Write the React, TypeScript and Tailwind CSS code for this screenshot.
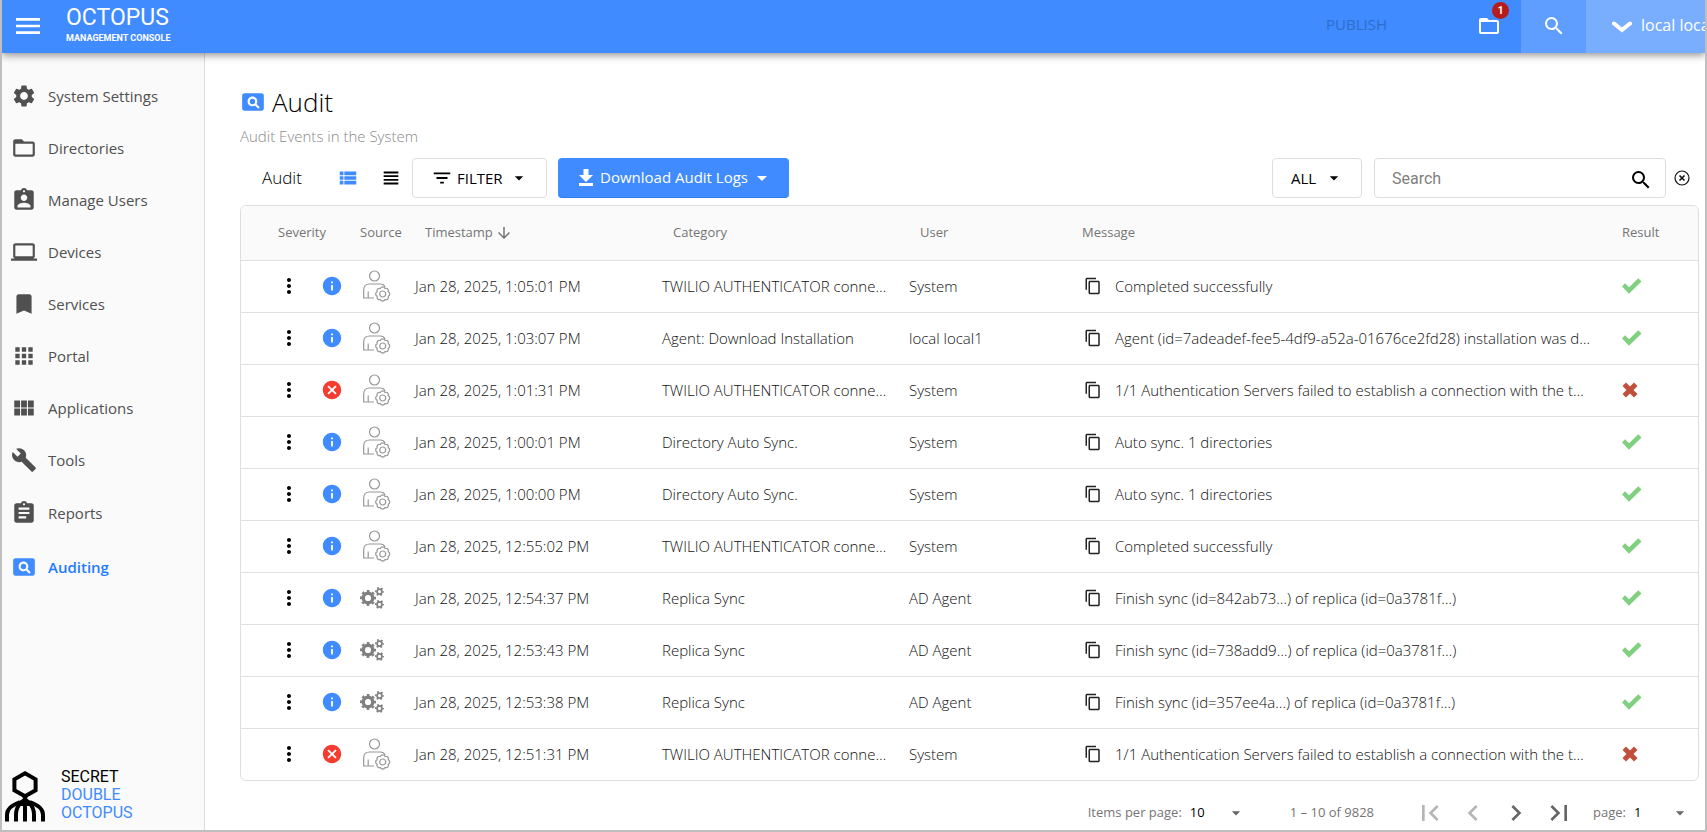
import React from "react";
import {
  MdApps,
  MdArrowDownward,
  MdArrowDropDown,
  MdAssignment,
  MdAssignmentInd,
  MdBookmark,
  MdBuild,
  MdCancel,
  MdChevronLeft,
  MdChevronRight,
  MdContentCopy,
  MdFilterList,
  MdFirstPage,
  MdFolderOpen,
  MdInfo,
  MdLaptop,
  MdLastPage,
  MdMenu,
  MdMoreVert,
  MdPageview,
  MdSearch,
  MdSettings,
  MdViewHeadline,
  MdViewList,
  MdViewModule,
} from "react-icons/md";

const menu = [
  { label: "System Settings", icon: MdSettings },
  { label: "Directories", icon: MdFolderOpen },
  { label: "Manage Users", icon: MdAssignmentInd },
  { label: "Devices", icon: MdLaptop },
  { label: "Services", icon: MdBookmark },
  { label: "Portal", icon: MdApps },
  { label: "Applications", icon: MdViewModule },
  { label: "Tools", icon: MdBuild },
  { label: "Reports", icon: MdAssignment, tall: true },
  { label: "Auditing", icon: MdPageview, tall: true, active: true },
];

type AuditEvent = {
  time: string;
  category: string;
  user: string;
  message: string;
  source: "user" | "agent";
  ok: boolean;
};

const TWILIO = "TWILIO AUTHENTICATOR conne…";
const FAILED = "1/1 Authentication Servers failed to establish a connection with the t…";

const events: AuditEvent[] = [
  { time: "1:05:01 PM", category: TWILIO, user: "System", message: "Completed successfully", source: "user", ok: true },
  {
    time: "1:03:07 PM",
    category: "Agent: Download Installation",
    user: "local local1",
    message: "Agent (id=7adeadef-fee5-4df9-a52a-01676ce2fd28) installation was d…",
    source: "user",
    ok: true,
  },
  { time: "1:01:31 PM", category: TWILIO, user: "System", message: FAILED, source: "user", ok: false },
  { time: "1:00:01 PM", category: "Directory Auto Sync.", user: "System", message: "Auto sync. 1 directories", source: "user", ok: true },
  { time: "1:00:00 PM", category: "Directory Auto Sync.", user: "System", message: "Auto sync. 1 directories", source: "user", ok: true },
  { time: "12:55:02 PM", category: TWILIO, user: "System", message: "Completed successfully", source: "user", ok: true },
  { time: "12:54:37 PM", category: "Replica Sync", user: "AD Agent", message: "Finish sync (id=842ab73…) of replica (id=0a3781f…)", source: "agent", ok: true },
  { time: "12:53:43 PM", category: "Replica Sync", user: "AD Agent", message: "Finish sync (id=738add9…) of replica (id=0a3781f…)", source: "agent", ok: true },
  { time: "12:53:38 PM", category: "Replica Sync", user: "AD Agent", message: "Finish sync (id=357ee4a…) of replica (id=0a3781f…)", source: "agent", ok: true },
  { time: "12:51:31 PM", category: TWILIO, user: "System", message: FAILED, source: "user", ok: false },
];

const UserGearIcon = () => (
  <svg viewBox="0 0 28 32" className="ml-[3px] h-8 w-7" fill="none" stroke="#979797" strokeWidth="1.200">
    <circle cx="11.5" cy="6" r="5" />
    <path d="M11 28H.7v-8c0-4 2.300-6 6-6H17c2.500 0 4.400 1 5 3" />
    <path d="M5.200 21.500V28" />
    <g transform="translate(19.700 24)">
      <path d="M5.540 2.300A2.500 2.500 0 0 1 2.300 5.540A2.500 2.500 0 0 1-2.300 5.540A2.500 2.500 0 0 1-5.540 2.300A2.500 2.500 0 0 1-5.540-2.300A2.500 2.500 0 0 1-2.300-5.540A2.500 2.500 0 0 1 2.300-5.540A2.500 2.500 0 0 1 5.540-2.300A2.500 2.500 0 0 1 5.540 2.300Z" />
      <circle r="3" />
    </g>
  </svg>
);

// ring + dashed ring for the teeth
const GearsIcon = () => (
  <svg viewBox="0 0 24 22" className="h-[22px] w-6" fill="none" stroke="#808080">
    <circle cx="8" cy="11" r="4.800" strokeWidth="3.400" />
    <circle cx="8" cy="11" r="7" strokeWidth="2" strokeDasharray="2.750 2.748" strokeDashoffset="1.375" />
    <circle cx="19.500" cy="4.600" r="2.500" strokeWidth="1.700" />
    <circle cx="19.500" cy="4.600" r="3.800" strokeWidth="1.500" strokeDasharray="1.800 2.179" strokeDashoffset="0.900" />
    <circle cx="19.500" cy="17.400" r="2.500" strokeWidth="1.700" />
    <circle cx="19.500" cy="17.400" r="3.800" strokeWidth="1.500" strokeDasharray="1.800 2.179" strokeDashoffset="0.900" />
  </svg>
);

const CheckIcon = () => (
  <svg viewBox="0 0 20 16" className="h-4 w-5" fill="#7fd17f">
    <title>Success</title>
    <path d="M0 8.500 3 5.300 7 9.200 16.300.3 19.500 3.500 7 15.800Z" />
  </svg>
);

const CrossIcon = () => (
  <svg viewBox="0 0 16 16" className="h-4 w-4" fill="#c04f3c">
    <title>Failure</title>
    <path d="M4 .5 8 4.500l4-4L15.500 4l-4 4 4 4-3.500 3.500-4-4-4 4L.5 12l4-4-4-4Z" />
  </svg>
);

const OctopusIcon = () => (
  <svg viewBox="0 0 40 51" className="h-[51px] w-10" fill="none" stroke="#000">
    <path d="M20 2.300 30.600 8.300V19.300L20 25.300 9.400 19.300V8.300Z" strokeWidth="4" />
    <path d="M17 25h6l-1 2.500 6 4.500-3 3H15l-3-3 6-4.500Z" fill="#000" stroke="none" />
    <path
      d="M20 28v22.500M16.500 31Q11 36 11 44v6.500M23.500 31Q29 36 29 44v6.500M15 31C7 34 2 37.500 2 43.500v7M25 31c8 3 13 6.500 13 12.500v7"
      strokeWidth="4"
    />
  </svg>
);

const TopBar = () => (
  <header className="relative z-10 flex h-[53px] shrink-0 items-stretch bg-[#3f8bff] text-white shadow-[0_2px_8px_rgba(0,0,0,0.45)]">
    <button className="ml-3 flex w-7 items-center justify-center pb-0.5" aria-label="Toggle menu">
      <MdMenu className="h-8 w-8 shrink-0" />
    </button>
    <a href="#home" className="ml-6 flex flex-col pt-1">
      <span className="font-[Roboto,sans-serif] text-[23px] leading-7">OCTOPUS</span>
      <span className="font-[Roboto,sans-serif] text-[9px] leading-3 font-bold whitespace-nowrap">MANAGEMENT CONSOLE</span>
    </a>
    <div className="ml-auto flex items-stretch">
      <button className="mr-[90px] pb-1 text-[15px] text-[#2f6dcb]" disabled>
        PUBLISH
      </button>
      <button className="relative mr-5 flex items-center pb-0.5" aria-label="Pending changes">
        <MdFolderOpen className="h-6 w-6" />
        <span className="absolute top-0.5 -right-2 flex h-[17px] w-[17px] items-center justify-center rounded-full bg-[#b71c1c] font-[Roboto,sans-serif] text-[10px] font-bold">
          1
        </span>
      </button>
      <button className="flex w-[65px] items-center justify-center bg-[#5f9eff] pb-0.5" aria-label="Search">
        <MdSearch className="h-6 w-6" />
      </button>
      <button className="flex w-[119px] items-center overflow-hidden bg-[#79aeff] pb-1 pl-[26px] text-base whitespace-nowrap">
        <svg viewBox="0 0 20 12" className="mt-1 mr-[9px] h-3 w-5 shrink-0" fill="none" stroke="#fff" strokeWidth="4" strokeLinecap="round">
          <path d="M2 2.500 10 9l8-6.500" />
        </svg>
        local local1
      </button>
    </div>
  </header>
);

const SideMenu = () => (
  <aside className="flex w-[203px] shrink-0 flex-col border-r border-[#dcdcdc] bg-[#fafafa]">
    <nav className="pt-[17px]">
      {menu.map(({ label, icon: Icon, tall, active }) => (
        <a
          key={label}
          href={`#${label}`}
          className={`flex items-center gap-[11px] pl-[9px] text-[15px] ${tall ? "h-[54px]" : "h-[52px]"} ${
            active ? "font-semibold text-[#1f7bff]" : "text-[#505050]"
          }`}
        >
          <Icon className={`h-[26px] w-[26px] ${active ? "text-[#3f8bff]" : ""}`} />
          {label}
        </a>
      ))}
    </nav>
    <div className="mt-auto flex items-end gap-4 pb-2 pl-[3px]">
      <OctopusIcon />
      <p className="font-[Roboto,sans-serif] text-base leading-[18px] text-[#3f8bff]">
        <span className="block text-black">SECRET</span>
        <span className="block">DOUBLE</span>
        <span className="block">OCTOPUS</span>
      </p>
    </div>
  </aside>
);

const Toolbar = () => (
  <div className="mt-3 flex h-10 items-center">
    <span className="ml-[22px] w-[75px] text-[17px] font-light">Audit</span>
    <button className="text-[#3f8bff]" aria-label="List view">
      <MdViewList className="h-[22px] w-[22px]" />
    </button>
    <button className="ml-[21px]" aria-label="Compact view">
      <MdViewHeadline className="h-[22px] w-[22px]" />
    </button>
    <button className="ml-[10px] flex h-10 w-[135px] items-center rounded border border-[#dedede] pl-[18px] text-[15px]">
      <MdFilterList className="mr-1 h-[22px] w-[22px]" />
      FILTER
      <MdArrowDropDown className="ml-1.5 h-5 w-5" />
    </button>
    <button className="ml-[11px] flex h-10 w-[231px] items-center rounded border-b border-[#2f7cf5] bg-[#3f8bff] pl-5 text-[15px] font-medium whitespace-nowrap text-white">
      <svg viewBox="0 0 16 18" className="mr-1.5 h-[18px] w-4 shrink-0" fill="currentColor">
        <path d="M5.500 0h5v6H15l-7 7-7-7h4.500ZM1 14h14v3H1Z" />
      </svg>
      Download Audit Logs
      <MdArrowDropDown className="ml-0.5 h-6 w-6 shrink-0" />
    </button>
    <div className="relative ml-auto">
      <select className="h-10 w-[90px] appearance-none rounded border border-[#dedede] bg-white pl-[18px] text-[15px]" aria-label="Severity">
        <option>ALL</option>
      </select>
      <MdArrowDropDown className="pointer-events-none absolute top-2.5 right-[18px] h-5 w-5" />
    </div>
    <div className="ml-3 flex h-10 w-[292px] items-center rounded border border-[#dedede] pr-3">
      <input
        type="search"
        placeholder="Search"
        aria-label="Search audit events"
        className="h-full w-full min-w-0 bg-transparent pl-[17px] font-[Roboto,sans-serif] text-base outline-none placeholder:text-[#808080]"
      />
      <button aria-label="Run search">
        <MdSearch className="mt-1 h-6 w-6" />
      </button>
    </div>
    <button className="mr-[9px] ml-2" aria-label="Clear search">
      <svg viewBox="0 0 16 16" className="h-4 w-4" fill="none" stroke="#111" strokeWidth="1.200">
        <circle cx="8" cy="8" r="7" />
        <path d="m5.500 5.500 5 5m0-5-5 5" strokeWidth="1.600" />
      </svg>
    </button>
  </div>
);

const AuditTable = () => (
  <div className="mt-[7px] overflow-hidden rounded-md border border-[#dedede]">
    <table className="w-full table-fixed text-left whitespace-nowrap">
      <colgroup>
        <col className="w-[103px]" />
        <col className="w-[55px]" />
        <col className="w-[247px]" />
        <col className="w-[247px]" />
        <col className="w-[173px]" />
        <col />
        <col className="w-[92px]" />
      </colgroup>
      <thead className="bg-[#fafafa] text-[13px] text-[#757575]">
        <tr className="h-[54px] border-b border-[#dedede] [&>th]:font-normal">
          <th className="pl-[37px]">Severity</th>
          <th className="pl-4">Source</th>
          <th className="pl-[26px]" aria-sort="descending">
            <button className="flex items-center gap-0.5">
              Timestamp
              <MdArrowDownward className="h-[18px] w-[18px]" />
            </button>
          </th>
          <th className="pl-[27px]">Category</th>
          <th className="pl-[27px]">User</th>
          <th className="pl-4">Message</th>
          <th className="pl-4">Result</th>
        </tr>
      </thead>
      <tbody className="text-[15px] font-light text-[#111]">
        {events.map((event) => (
          <tr key={event.time} className="h-[52px] border-b border-[#e0e0e0] last:border-b-0">
            <td className="pl-9">
              <div className="flex items-center gap-5">
                <button aria-label="Row actions">
                  <MdMoreVert className="h-6 w-6 text-black" />
                </button>
                {event.ok ? (
                  <MdInfo className="h-[22px] w-[22px] text-[#3f8bff]" />
                ) : (
                  <MdCancel className="h-[22px] w-[22px] text-[#f63c31]" />
                )}
              </div>
            </td>
            <td className="pl-4">{event.source === "user" ? <UserGearIcon /> : <GearsIcon />}</td>
            <td className="pl-4">Jan 28, 2025, {event.time}</td>
            <td className="pl-4">{event.category}</td>
            <td className="pl-4">{event.user}</td>
            <td className="pl-[18px]">
              <div className="flex items-center gap-[13px]">
                <button aria-label="Copy message">
                  <MdContentCopy className="h-[18px] w-[18px] text-[#222]" />
                </button>
                {event.message}
              </div>
            </td>
            <td className="pl-4">{event.ok ? <CheckIcon /> : <CrossIcon />}</td>
          </tr>
        ))}
      </tbody>
    </table>
  </div>
);

const Paginator = () => (
  <div className="flex h-[49px] items-center justify-end pt-3.5 pr-[9px] text-[13px] text-[#757575]">
    <label htmlFor="page-size">Items per page:</label>
    <div className="relative ml-2">
      <select id="page-size" className="w-14 appearance-none bg-transparent text-black">
        <option>10</option>
      </select>
      <MdArrowDropDown className="pointer-events-none absolute top-0 right-0 h-5 w-5 text-[#666]" />
    </div>
    <span className="ml-11">1 – 10 of 9828</span>
    <div className="ml-10 flex items-center gap-[11px] text-[#666]">
      <button disabled aria-label="First page" className="text-[#b5b5b5]">
        <MdFirstPage className="h-8 w-8" />
      </button>
      <button disabled aria-label="Previous page" className="text-[#b5b5b5]">
        <MdChevronLeft className="h-8 w-8" />
      </button>
      <button aria-label="Next page">
        <MdChevronRight className="h-8 w-8" />
      </button>
      <button aria-label="Last page">
        <MdLastPage className="h-8 w-8" />
      </button>
    </div>
    <label htmlFor="page" className="ml-[18px]">
      page:
    </label>
    <div className="relative ml-2">
      <select id="page" className="w-14 appearance-none bg-transparent text-black">
        <option>1</option>
      </select>
      <MdArrowDropDown className="pointer-events-none absolute top-0 right-0 h-5 w-5 text-[#666]" />
    </div>
  </div>
);

export default function App() {
  return (
    <div className="flex min-h-screen flex-col overflow-hidden border-x-2 border-b-2 border-[#bfbfbf] bg-white font-['Open_Sans','Noto_Sans',sans-serif] text-black">
      <TopBar />
      <div className="flex flex-1">
        <SideMenu />
        <main className="min-w-0 flex-1 pt-[31px] pr-1.5 pl-[35px]">
          <h1 className="flex h-9 items-center gap-1.5 text-[26px] font-light">
            <MdPageview className="h-[26px] w-[26px] text-[#3f8bff]" />
            Audit
          </h1>
          <p className="mt-1.5 text-[15px] leading-5 font-light text-[#8a8a8a]">Audit Events in the System</p>
          <Toolbar />
          <AuditTable />
          <Paginator />
        </main>
      </div>
    </div>
  );
}
